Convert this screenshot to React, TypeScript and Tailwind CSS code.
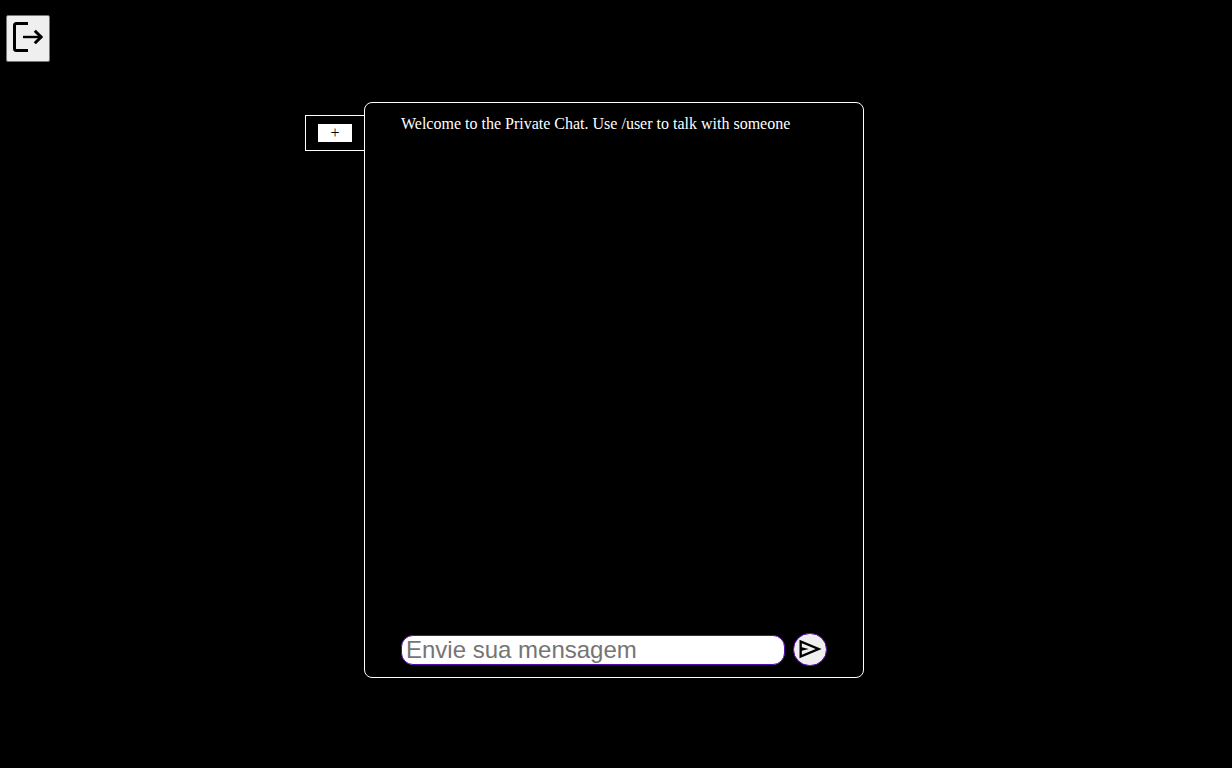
export default function App() {
  return (
    <div className="flex min-h-screen flex-col bg-black font-['Liberation_Serif',serif] text-base text-white">
      <header className="flex px-1.5 pt-[15px]">
        <button
          type="button"
          aria-label="Logout"
          className="flex h-[47px] w-11 items-start justify-center rounded-[2px] border border-[#767676] bg-[#efefef] pt-px text-black"
        >
          <svg viewBox="0 0 40 40" className="size-10 shrink-0" fill="none" stroke="currentColor" strokeWidth="3" aria-hidden="true">
            <path d="M20 6.5H8.5Q6.5 6.5 6.5 8.5V31.5Q6.5 33.5 8.5 33.5H20" />
            <path d="M15 20H34" strokeWidth="2.4" />
            <path d="M26.8 13.7L33.1 20L26.8 26.3" />
          </svg>
        </button>
      </header>
      <main className="flex items-start justify-center pt-10 pr-[63px]">
        <aside className="mt-[13px] flex h-9 w-[59px] items-center justify-center border border-r-0 border-white">
          <button
            type="button"
            aria-label="Add user"
            className="flex h-[18px] w-[34px] items-center justify-center bg-white text-base leading-none text-black"
          >
            +
          </button>
        </aside>
        <section className="flex h-[75vh] w-full max-w-[500px] flex-col justify-between rounded-lg border border-white px-9 pt-3 pb-[11px]">
          <p className="leading-[18px]">Welcome to the Private Chat. Use /user to talk with someone</p>
          <form className="flex items-center gap-2" onSubmit={(e) => e.preventDefault()}>
            <input
              type="text"
              aria-label="Mensagem"
              placeholder="Envie sua mensagem"
              className="h-[30px] min-w-0 flex-1 rounded-xl border border-[#5a0bb0] bg-white px-1 font-['Liberation_Sans',sans-serif] text-2xl leading-none text-black placeholder:text-[#757575]"
            />
            <button
              type="submit"
              aria-label="Enviar"
              className="flex h-[33px] w-[34px] items-center justify-center rounded-full border border-[#5a0bb0] bg-[#efefef] pb-0.5 text-black"
            >
              <svg viewBox="0 -960 960 960" className="size-7 shrink-0" fill="currentColor" aria-hidden="true">
                <path d="M120-160v-640l760 320-760 320Zm80-120 474-200-474-200v140l240 60-240 60v140Z" />
              </svg>
            </button>
          </form>
        </section>
      </main>
    </div>
  );
}
